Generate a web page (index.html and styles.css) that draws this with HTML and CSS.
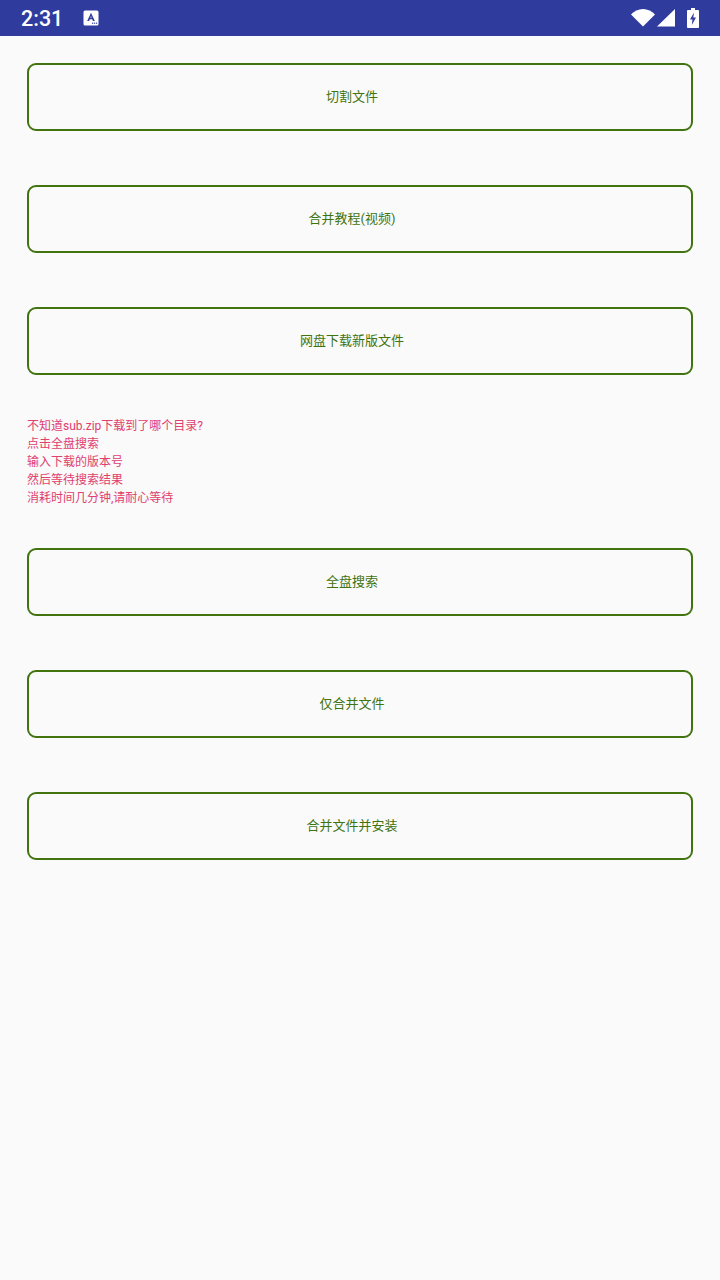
FILE: index.html
```html
<!DOCTYPE html>
<html lang="zh">
<head>
    <meta charset="UTF-8">
    <meta name="viewport" content="width=device-width, initial-scale=1.0">
    <title>合并文件</title>
    <link rel="stylesheet" href="styles.css">
</head>
<body>
    <header class="statusbar">
        <span class="clock">2:31</span>
        <svg class="notify" width="16" height="16" viewBox="0 0 16 16">
            <rect x="0.5" y="0.5" width="15" height="15" rx="1.5" fill="#fff"/>
            <path d="M8 2.800 L4.200 11 H6.100 L6.800 9.200 H9.200 L9.900 11 H11.800 Z M7.400 7.800 L8 6 L8.600 7.800 Z" fill="#2f3c9e" fill-rule="evenodd"/>
            <rect x="9" y="12.600" width="1.200" height="1.200" fill="#2f3c9e"/>
            <rect x="11" y="12.600" width="1.200" height="1.200" fill="#2f3c9e"/>
            <rect x="13" y="12.600" width="1.200" height="1.200" fill="#2f3c9e"/>
        </svg>
        <span class="spacer"></span>
        <svg class="wifi" width="24" height="18" viewBox="0 0 24 18">
            <path d="M0 5.500 C3.200 2.300 7.400 0 12 0 C16.600 0 20.800 2.300 24 5.500 L12 17.500 Z" fill="#fff"/>
        </svg>
        <svg class="signal" width="18" height="18" viewBox="0 0 18 18">
            <path d="M0 17.500 L18 0 V17.500 Z" fill="#fff"/>
        </svg>
        <svg class="battery" width="12" height="20" viewBox="0 0 12 20">
            <path d="M4 0 H8 V2 H11 C11.500 2 12 2.500 12 3 V19 C12 19.500 11.500 20 11 20 H1 C0.500 20 0 19.500 0 19 V3 C0 2.500 0.500 2 1 2 H4 Z M7 4.500 L3 11.500 H5.500 L4.800 17 L9 9.500 H6.300 Z" fill="#fff" fill-rule="evenodd"/>
        </svg>
    </header>
    <main class="content">
        <button class="action" type="button">切割文件</button>
        <button class="action" type="button">合并教程(视频)</button>
        <button class="action" type="button">网盘下载新版文件</button>
        <p class="hint">不知道sub.zip下载到了哪个目录?<br>点击全盘搜索<br>输入下载的版本号<br>然后等待搜索结果<br>消耗时间几分钟,请耐心等待</p>
        <button class="action" type="button">全盘搜索</button>
        <button class="action" type="button">仅合并文件</button>
        <button class="action" type="button">合并文件并安装</button>
    </main>
</body>
</html>
```

FILE: styles.css
```css
html, body {
  margin: 0;
  height: 100%;
}

body {
  background: #fafafa;
  font-family: Roboto, "Noto Sans CJK SC", sans-serif;
  overflow: hidden;
}

.statusbar {
  display: flex;
  align-items: center;
  height: 36px;
  padding: 0 21px;
  background: #2f3c9e;
  color: #fff;
}

.clock {
  font-size: 21.5px;
  font-weight: 500;
  width: 62px;
}

.spacer {
  flex: 1;
}

.wifi {
  margin-right: 2px;
}

.signal {
  margin-right: 12px;
}

.content {
  display: flex;
  flex-direction: column;
  gap: 54px;
  padding: 27px;
}

.action {
  height: 68px;
  box-sizing: border-box;
  border: 2px solid #41730f;
  border-radius: 9px;
  background: transparent;
  color: #41730f;
  font: 13px Roboto, "Noto Sans CJK SC", sans-serif;
  padding: 0 16px 4px 0;
}

.hint {
  margin: -12px 0 -13px;
  color: #e0406e;
  font-size: 12px;
  line-height: 18px;
}
```
